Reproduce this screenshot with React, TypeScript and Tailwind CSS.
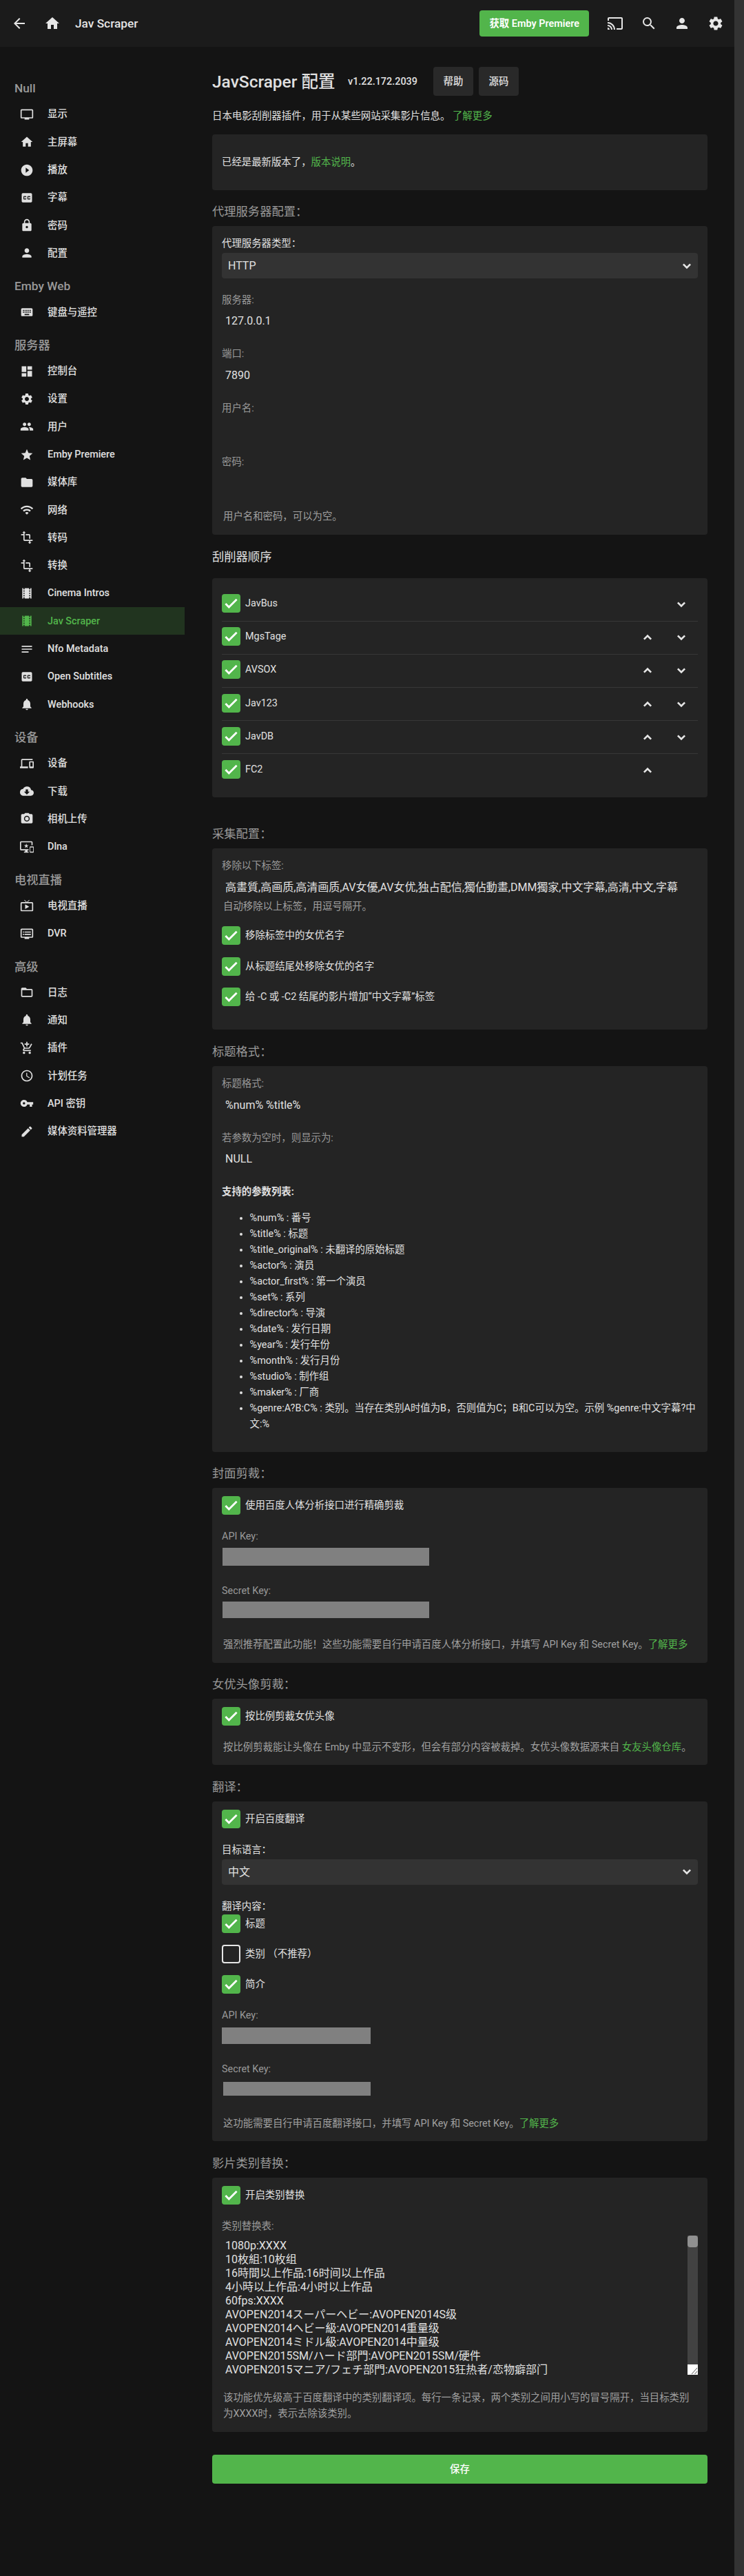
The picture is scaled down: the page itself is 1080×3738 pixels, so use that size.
import type { ReactNode } from "react";
import type { IconType } from "react-icons";
import {
  MdAddShoppingCart,
  MdArrowBack,
  MdCast,
  MdClosedCaption,
  MdCloudDownload,
  MdDashboard,
  MdDevices,
  MdDvr,
  MdEdit,
  MdFolder,
  MdFolderOpen,
  MdHome,
  MdImportantDevices,
  MdKeyboard,
  MdLiveTv,
  MdLock,
  MdNotes,
  MdNotifications,
  MdPeople,
  MdPerson,
  MdPhotoCamera,
  MdPlayCircleFilled,
  MdSchedule,
  MdSearch,
  MdSettings,
  MdStar,
  MdTheaters,
  MdTransform,
  MdTv,
  MdVpnKey,
  MdWifi,
} from "react-icons/md";

type NavItem = { label: string; icon: IconType; active?: boolean };
type NavGroup = { title: string; items: NavItem[] };

const NAV: NavGroup[] = [
  {
    title: "Null",
    items: [
      { label: "显示", icon: MdTv },
      { label: "主屏幕", icon: MdHome },
      { label: "播放", icon: MdPlayCircleFilled },
      { label: "字幕", icon: MdClosedCaption },
      { label: "密码", icon: MdLock },
      { label: "配置", icon: MdPerson },
    ],
  },
  { title: "Emby Web", items: [{ label: "键盘与遥控", icon: MdKeyboard }] },
  {
    title: "服务器",
    items: [
      { label: "控制台", icon: MdDashboard },
      { label: "设置", icon: MdSettings },
      { label: "用户", icon: MdPeople },
      { label: "Emby Premiere", icon: MdStar },
      { label: "媒体库", icon: MdFolder },
      { label: "网络", icon: MdWifi },
      { label: "转码", icon: MdTransform },
      { label: "转换", icon: MdTransform },
      { label: "Cinema Intros", icon: MdTheaters },
      { label: "Jav Scraper", icon: MdTheaters, active: true },
      { label: "Nfo Metadata", icon: MdNotes },
      { label: "Open Subtitles", icon: MdClosedCaption },
      { label: "Webhooks", icon: MdNotifications },
    ],
  },
  {
    title: "设备",
    items: [
      { label: "设备", icon: MdDevices },
      { label: "下载", icon: MdCloudDownload },
      { label: "相机上传", icon: MdPhotoCamera },
      { label: "Dlna", icon: MdImportantDevices },
    ],
  },
  {
    title: "电视直播",
    items: [
      { label: "电视直播", icon: MdLiveTv },
      { label: "DVR", icon: MdDvr },
    ],
  },
  {
    title: "高级",
    items: [
      { label: "日志", icon: MdFolderOpen },
      { label: "通知", icon: MdNotifications },
      { label: "插件", icon: MdAddShoppingCart },
      { label: "计划任务", icon: MdSchedule },
      { label: "API 密钥", icon: MdVpnKey },
      { label: "媒体资料管理器", icon: MdEdit },
    ],
  },
];

const SCRAPERS = ["JavBus", "MgsTage", "AVSOX", "Jav123", "JavDB", "FC2"];

const PARAMS = [
  "%num% : 番号",
  "%title% : 标题",
  "%title_original% : 未翻译的原始标题",
  "%actor% : 演员",
  "%actor_first% : 第一个演员",
  "%set% : 系列",
  "%director% : 导演",
  "%date% : 发行日期",
  "%year% : 发行年份",
  "%month% : 发行月份",
  "%studio% : 制作组",
  "%maker% : 厂商",
  "%genre:A?B:C% : 类别。当存在类别A时值为B，否则值为C；B和C可以为空。示例 %genre:中文字幕?中文:%",
];

const REPLACEMENTS = [
  "1080p:XXXX",
  "10枚組:10枚组",
  "16時間以上作品:16时间以上作品",
  "4小時以上作品:4小时以上作品",
  "60fps:XXXX",
  "AVOPEN2014スーパーヘビー:AVOPEN2014S级",
  "AVOPEN2014ヘビー級:AVOPEN2014重量级",
  "AVOPEN2014ミドル級:AVOPEN2014中量级",
  "AVOPEN2015SM/ハード部門:AVOPEN2015SM/硬件",
  "AVOPEN2015マニア/フェチ部門:AVOPEN2015狂热者/恋物癖部门",
];

function Chevron({ up = false }: { up?: boolean }) {
  return (
    <svg viewBox="0 0 14 14" className="size-[14px] shrink-0" fill="none" stroke="#e6e6e6" strokeWidth="2.6">
      <path d={up ? "M1.9 9.7 7 4.6l5.1 5.1" : "M1.9 4.3 7 9.4l5.1-5.1"} />
    </svg>
  );
}

function Heading({ children, className = "h-[53px] pt-[11px]" }: { children: ReactNode; className?: string }) {
  return <h2 className={`flex items-center text-[17.3px] text-[#999999] ${className}`}>{children}</h2>;
}

function Panel({ children, className }: { children: ReactNode; className: string }) {
  return <section className={`rounded bg-[#242424] px-[14px] ${className}`}>{children}</section>;
}

function Check({ children, checked = true, className = "" }: { children: ReactNode; checked?: boolean; className?: string }) {
  return (
    <label className={`flex h-[27px] items-center gap-[7px] ${className}`}>
      {checked ? (
        <span className="flex size-[27px] items-center justify-center rounded bg-[#52b54b]">
          <svg viewBox="0 0 27 27" className="size-[27px]" fill="none" stroke="#fff" strokeWidth="2.8">
            <path d="M5.4 14l4.9 5L21.6 7.8" />
          </svg>
        </span>
      ) : (
        <span className="size-[27px] rounded border-2 border-[#e6e6e6]" />
      )}
      <span>{children}</span>
    </label>
  );
}

function Field({ label, value, className = "h-[78.6px]" }: { label: string; value?: string; className?: string }) {
  return (
    <div className={className}>
      <div className="h-[23px] text-[#999999]">{label}</div>
      <div className="flex h-[38px] items-center whitespace-nowrap pl-[5px] text-[16px]">{value}</div>
    </div>
  );
}

function Select({ label, value, className }: { label: string; value: string; className: string }) {
  return (
    <div className={className}>
      <div className="h-[23px]">{label}</div>
      <div className="mt-[2px] flex h-[37px] items-center justify-between rounded bg-[#333333] pl-[9px] pr-[9px] text-[16px]">
        <span>{value}</span>
        <Chevron />
      </div>
    </div>
  );
}

function Note({ children, className }: { children: ReactNode; className?: string }) {
  return <p className={`pl-[2px] text-[#a0a0a0] ${className ?? ""}`}>{children}</p>;
}

function Link({ children }: { children: ReactNode }) {
  return <a className="text-[#52b54b]">{children}</a>;
}

function Sidebar() {
  return (
    <nav className="w-[268px] shrink-0 pt-[32.5px]">
      {NAV.map((group) => (
        <div key={group.title}>
          <div className="flex h-[45.3px] items-center pl-[21px] pt-[11.3px] text-[17.3px] font-medium text-[#999999]">
            {group.title}
          </div>
          {group.items.map(({ label, icon: Icon, active }) => (
            <div
              key={label}
              className={`flex h-[40.3px] items-center gap-[20px] pl-[29px] font-medium ${
                active ? "bg-[#21341f] text-[#52b54b]" : "text-[#e0e0e0]"
              }`}
            >
              <Icon className="size-[20px] shrink-0" />
              <span>{label}</span>
            </div>
          ))}
        </div>
      ))}
    </nav>
  );
}

function Header() {
  return (
    <header className="flex h-[68px] items-center bg-[#1b1b1b] pl-[16px] pr-[15px] font-medium text-[#e6e6e6]">
      <MdArrowBack className="size-[24px]" />
      <MdHome className="ml-[24px] size-[24px]" />
      <span className="ml-[21px] text-[17.3px]">Jav Scraper</span>
      <button className="ml-auto h-[38px] w-[159px] rounded bg-[#52b54b] font-semibold text-white">获取 Emby Premiere</button>
      <div className="ml-[26px] flex gap-[24.6px]">
        <MdCast className="size-[24px]" />
        <MdSearch className="size-[24px]" />
        <MdPerson className="size-[24px]" />
        <MdSettings className="size-[24px]" />
      </div>
    </header>
  );
}

export default function App() {
  return (
    <div className="flex h-[3738px] w-[1080px] overflow-hidden bg-[#141414] font-['Roboto','Noto_Sans_CJK_SC',sans-serif] text-[14.4px] leading-[23px] text-[#e0e0e0]">
      <div className="w-[1066px]">
        <Header />
        <div className="flex">
          <Sidebar />
          <main className="ml-[40px] w-[719px] pt-[29px]">
            <div className="flex h-[42px] items-center">
              <h1 className="w-[197px] whitespace-nowrap text-[24.5px] font-medium">JavScraper 配置</h1>
              <span className="w-[124px] font-medium">v1.22.172.2039</span>
              <button className="h-[42px] w-[58px] rounded bg-[#292929] font-medium">帮助</button>
              <button className="ml-[8px] h-[42px] w-[58px] rounded bg-[#292929] font-medium">源码</button>
            </div>
            <p className="mt-[18px]">
              日本电影刮削器插件，用于从某些网站采集影片信息。 <Link>了解更多</Link>
            </p>
            <Panel className="mt-[15px] flex h-[81px] items-center">
              <p>
                已经是最新版本了，<Link>版本说明</Link>。
              </p>
            </Panel>

            <Heading className="h-[52px] pt-[11px]">代理服务器配置：</Heading>
            <Panel className="h-[448px] pt-[14px]">
              <Select label="代理服务器类型：" value="HTTP" className="h-[81.5px]" />
              <Field label="服务器:" value="127.0.0.1" />
              <Field label="端口:" value="7890" />
              <Field label="用户名:" />
              <Field label="密码:" />
              <Note>用户名和密码，可以为空。</Note>
            </Panel>

            <Heading className="h-[63px] pt-[1px] !text-[#e0e0e0]">刮削器顺序</Heading>
            <Panel className="h-[318px] pt-[14.4px]">
              {SCRAPERS.map((name, i) => (
                <div
                  key={name}
                  className={`flex h-[48.2px] items-center justify-between pr-[17px] ${
                    i < SCRAPERS.length - 1 ? "border-b border-[#373737]" : ""
                  }`}
                >
                  <Check className="-mt-[3px]">{name}</Check>
                  <div className="flex w-[63px] justify-between">
                    <span className="size-[14px]">{i > 0 && <Chevron up />}</span>
                    <span className="size-[14px]">{i < SCRAPERS.length - 1 && <Chevron />}</span>
                  </div>
                </div>
              ))}
            </Panel>

            <Heading className="h-[74px] pt-[32px]">采集配置：</Heading>
            <Panel className="h-[263px] pt-[14px]">
              <Field
                label="移除以下标签:"
                value="高畫質,高画质,高清画质,AV女優,AV女优,独占配信,獨佔動畫,DMM獨家,中文字幕,高清,中文,字幕"
                className="h-[59px]"
              />
              <Note>自动移除以上标签，用逗号隔开。</Note>
              <Check className="mt-[17px]">移除标签中的女优名字</Check>
              <Check className="mt-[17.5px]">从标题结尾处移除女优的名字</Check>
              <Check className="mt-[17.5px]">给 -C 或 -C2 结尾的影片增加“中文字幕”标签</Check>
            </Panel>

            <Heading>标题格式：</Heading>
            <Panel className="h-[559.5px] pt-[14px]">
              <Field label="标题格式:" value="%num% %title%" />
              <Field label="若参数为空时，则显示为:" value="NULL" />
              <p className="font-bold">支持的参数列表:</p>
              <ul className="mt-[14.4px] list-disc pl-[40.6px] leading-[23.04px]">
                {PARAMS.map((p) => (
                  <li key={p}>{p}</li>
                ))}
              </ul>
            </Panel>

            <Heading className="h-[52.5px] pt-[11px]">封面剪裁：</Heading>
            <Panel className="h-[254px] pt-[12px]">
              <Check>使用百度人体分析接口进行精确剪裁</Check>
              <div className="mt-[20px] h-[23px] text-[#999999]">API Key:</div>
              <div className="ml-px mt-[5px] h-[26px] w-[300px] bg-[#808080]" />
              <div className="mt-[24.5px] h-[23px] text-[#999999]">Secret Key:</div>
              <div className="ml-px mt-[4.5px] h-[24px] w-[300px] bg-[#808080]" />
              <Note className="mt-[26.5px]">
                强烈推荐配置此功能！这些功能需要自行申请百度人体分析接口，并填写 API Key 和 Secret Key。<Link>了解更多</Link>
              </Note>
            </Panel>

            <Heading className="h-[52px] pt-[11px]">女优头像剪裁：</Heading>
            <Panel className="h-[96px] pt-[12px]">
              <Check>按比例剪裁女优头像</Check>
              <Note className="mt-[20px]">
                按比例剪裁能让头像在 Emby 中显示不变形，但会有部分内容被裁掉。女优头像数据源来自 <Link>女友头像仓库</Link>。
              </Note>
            </Panel>

            <Heading>翻译：</Heading>
            <Panel className="h-[493px] pt-[12px]">
              <Check>开启百度翻译</Check>
              <Select label="目标语言：" value="中文" className="mt-[19.5px] h-[82px]" />
              <div className="h-[23px]">翻译内容：</div>
              <Check>标题</Check>
              <Check className="mt-[17px]" checked={false}>
                类别 （不推荐）
              </Check>
              <Check className="mt-[17px]">简介</Check>
              <div className="mt-[20px] h-[23px] text-[#999999]">API Key:</div>
              <div className="mt-[6.5px] h-[24px] w-[216px] bg-[#808080]" />
              <div className="mt-[25px] h-[23px] text-[#999999]">Secret Key:</div>
              <div className="ml-[2px] mt-[7px] h-[20px] w-[214px] bg-[#808080]" />
              <Note className="mt-[28.5px]">
                这功能需要自行申请百度翻译接口，并填写 API Key 和 Secret Key。<Link>了解更多</Link>
              </Note>
            </Panel>

            <Heading>影片类别替换：</Heading>
            <Panel className="h-[369px] pt-[12px]">
              <Check>开启类别替换</Check>
              <div className="mt-[19.5px] h-[23px] text-[#999999]">类别替换表:</div>
              <div className="mt-[2.5px] flex h-[202px] justify-between">
                <div className="pl-[5px] pt-[5px] text-[16px] leading-[20px]">
                  {REPLACEMENTS.map((r) => (
                    <div key={r} className="h-[20px] whitespace-nowrap">
                      {r}
                    </div>
                  ))}
                </div>
                <div className="flex w-[15px] flex-col bg-[#424242]">
                  <div className="h-[17px] rounded bg-[#909090]" />
                  <svg viewBox="0 0 15 15" className="mt-auto size-[15px] bg-white" stroke="#555" fill="none">
                    <path d="M6 14 14 5M10.5 14 14 10" />
                  </svg>
                </div>
              </div>
              <Note className="mt-[21.5px]">
                该功能优先级高于百度翻译中的类别翻译项。每行一条记录，两个类别之间用小写的冒号隔开，当目标类别为XXXX时，表示去除该类别。
              </Note>
            </Panel>

            <button className="mt-[33px] h-[42px] w-full rounded bg-[#52b54b] font-medium text-white">保存</button>
          </main>
        </div>
      </div>
      <div className="w-[14px] bg-[#333333]" />
    </div>
  );
}
